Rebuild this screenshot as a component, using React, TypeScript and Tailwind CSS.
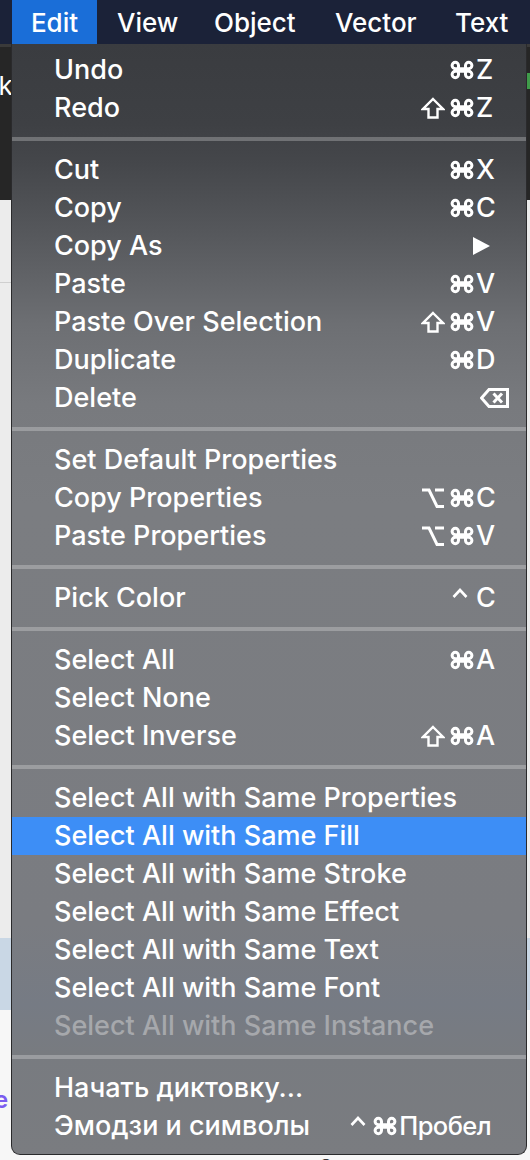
import React from "react";

type Item = {
  label: string;
  mods?: string[];
  keyc?: string;
  special?: "arrow" | "delete" | "space";
  highlight?: boolean;
  disabled?: boolean;
};

const groups: Item[][] = [
  [
    { label: "Undo", mods: ["cmd"], keyc: "Z" },
    { label: "Redo", mods: ["shift", "cmd"], keyc: "Z" },
  ],
  [
    { label: "Cut", mods: ["cmd"], keyc: "X" },
    { label: "Copy", mods: ["cmd"], keyc: "C" },
    { label: "Copy As", special: "arrow" },
    { label: "Paste", mods: ["cmd"], keyc: "V" },
    { label: "Paste Over Selection", mods: ["shift", "cmd"], keyc: "V" },
    { label: "Duplicate", mods: ["cmd"], keyc: "D" },
    { label: "Delete", special: "delete" },
  ],
  [
    { label: "Set Default Properties" },
    { label: "Copy Properties", mods: ["opt", "cmd"], keyc: "C" },
    { label: "Paste Properties", mods: ["opt", "cmd"], keyc: "V" },
  ],
  [{ label: "Pick Color", mods: ["ctrl"], keyc: "C" }],
  [
    { label: "Select All", mods: ["cmd"], keyc: "A" },
    { label: "Select None" },
    { label: "Select Inverse", mods: ["shift", "cmd"], keyc: "A" },
  ],
  [
    { label: "Select All with Same Properties" },
    { label: "Select All with Same Fill", highlight: true },
    { label: "Select All with Same Stroke" },
    { label: "Select All with Same Effect" },
    { label: "Select All with Same Text" },
    { label: "Select All with Same Font" },
    { label: "Select All with Same Instance", disabled: true },
  ],
  [
    { label: "Начать диктовку..." },
    { label: "Эмодзи и символы", special: "space" },
  ],
];

function Cmd() {
  return (
    <svg width="24" height="22" viewBox="0 0 24 22" className="shrink-0">
      <path
        d="M15.5 6.5 V15.5 A3.2 3.2 0 1 0 18.7 12.3 H5.3 A3.2 3.2 0 1 0 8.5 15.5 V6.5 A3.2 3.2 0 1 0 5.3 9.7 H18.7 A3.2 3.2 0 1 0 15.5 6.5 Z"
        fill="none"
        stroke="currentColor"
        strokeWidth="3"
      />
    </svg>
  );
}

function Shift() {
  return (
    <svg width="24" height="22" viewBox="0 0 24 22" className="shrink-0">
      <path
        d="M12 2 L22 12 H16.5 V20.5 H7.5 V12 H2 Z"
        fill="none"
        stroke="currentColor"
        strokeWidth="2.4"
        strokeLinejoin="miter"
      />
    </svg>
  );
}

function Opt() {
  return (
    <svg width="24" height="22" viewBox="0 0 24 22" className="shrink-0">
      <path
        d="M1 3 H8 L16 19.5 H23 M14 3 H23"
        fill="none"
        stroke="currentColor"
        strokeWidth="3"
      />
    </svg>
  );
}

function Ctrl() {
  return (
    <svg width="16" height="22" viewBox="0 0 16 22" className="shrink-0">
      <path d="M1.5 10 L8 3 L14.5 10" fill="none" stroke="currentColor" strokeWidth="2.6" />
    </svg>
  );
}

function Mod({ m }: { m: string }) {
  if (m === "cmd") return <Cmd />;
  if (m === "shift") return <Shift />;
  if (m === "opt") return <Opt />;
  return <Ctrl />;
}

function Shortcut({ item }: { item: Item }) {
  if (item.special === "arrow") {
    return (
      <div className="flex items-center pr-[36px]">
        <svg width="17" height="18" viewBox="0 0 17 18">
          <path d="M0 0 L17 9 L0 18 Z" fill="#ffffff" />
        </svg>
      </div>
    );
  }
  if (item.special === "delete") {
    return (
      <div className="flex items-center pr-[17px]">
        <svg width="29" height="20" viewBox="0 0 29 20">
          <path
            d="M9 1.5 H27.5 V18.5 H9 L1.5 10 Z"
            fill="none"
            stroke="#ffffff"
            strokeWidth="3"
            strokeLinejoin="miter"
          />
          <path d="M13.5 5.5 L22 14.5 M22 5.5 L13.5 14.5" stroke="#ffffff" strokeWidth="3" />
        </svg>
      </div>
    );
  }
  if (item.special === "space") {
    return (
      <div className="flex items-center gap-[7px] pr-[35px]">
        <Ctrl />
        <div className="flex items-center gap-[2px]">
          <Cmd />
          <span className="text-[25.5px] tracking-[-0.6px]">Пробел</span>
        </div>
      </div>
    );
  }
  if (!item.keyc) return null;
  return (
    <div className="flex items-center pr-[30px]">
      <div className="flex items-center gap-[5px] mr-[2px]">
        {item.mods?.map((m, i) => (
          <Mod key={i} m={m} />
        ))}
      </div>
      <span className={`w-[20px] text-left ${item.mods?.[0] === "ctrl" ? "ml-[6px]" : ""}`}>
        {item.keyc}
      </span>
    </div>
  );
}

function Row({ item }: { item: Item }) {
  const color = item.disabled ? "text-[#a6a8ac]" : "text-white";
  const bg = item.highlight ? "bg-[#3d8ef6]" : "";
  return (
    <div className={`flex h-[38px] items-center justify-between pl-[42px] ${bg} ${color}`}>
      <span>{item.label}</span>
      <Shortcut item={item} />
    </div>
  );
}

export default function App() {
  return (
    <div className="relative w-[530px] h-[1160px] overflow-hidden bg-[#f2f2f2] font-['Inter','Noto_Sans',sans-serif]">
      {/* background page behind the menu */}
      <div className="flex flex-col w-full h-full">
        <div className="flex h-[44px] items-center bg-[#1b2238] text-white text-[26px] font-medium">
          <div className="flex h-full w-[85px] items-center justify-center bg-[#1a6ed8] ml-[12px]">Edit</div>
          <div className="w-[117px] pl-[20px]">View</div>
          <div className="w-[121px]">Object</div>
          <div className="w-[120px]">Vector</div>
          <div>Text</div>
        </div>
        <div className="flex h-[156px] bg-[#262626] border-t-[3px] border-[#3a3a3a]">
          <div className="w-[12px] overflow-hidden text-white text-[26px] leading-none pt-[26px]">
            <span className="ml-[-10px]">tk</span>
          </div>
          <div className="flex-1" />
          <div className="w-[4px] mt-[26px] h-[16px] bg-[#3f9b4a]" />
        </div>
        <div className="flex flex-col h-[738px] bg-[#ececec]">
          <div className="h-[82px]" />
          <div className="h-[1px] bg-[#cfcfcf] w-[12px]" />
        </div>
        <div className="h-[72px] bg-[#c9d7e5]" />
        <div className="flex-1 bg-[#f7f7f7] relative">
          <div className="pt-[78px] text-[24px] font-semibold text-[#7b5cf0] leading-none">
            <span className="ml-[-6px]">e</span>
          </div>
          <div className="absolute left-[318px] top-[146px] text-[26px] font-medium text-[#333] leading-none">2 row</div>
        </div>
      </div>

      {/* dropdown menu */}
      <div className="absolute left-[11px] top-[44px] w-[516px] h-[1111px] rounded-b-[9px] border border-t-0 border-[#2a2a2c] overflow-hidden bg-[linear-gradient(180deg,#3a3c40_0px,#3e4044_80px,#45474b_120px,#56585c_190px,#6d6f73_280px,#787a7e_360px,#7b7d81_460px,#7a7c81_880px,#767b84_960px,#787b80_1010px,#7a7c80_100%)] text-[27px] font-medium pt-[7px]">
        {groups.map((g, gi) => (
          <div key={gi}>
            {gi > 0 && (
              <div className="flex h-[24px] items-center">
                <div className="h-[4px] w-full bg-white/25" />
              </div>
            )}
            {g.map((it) => (
              <Row key={it.label} item={it} />
            ))}
          </div>
        ))}
      </div>
    </div>
  );
}
